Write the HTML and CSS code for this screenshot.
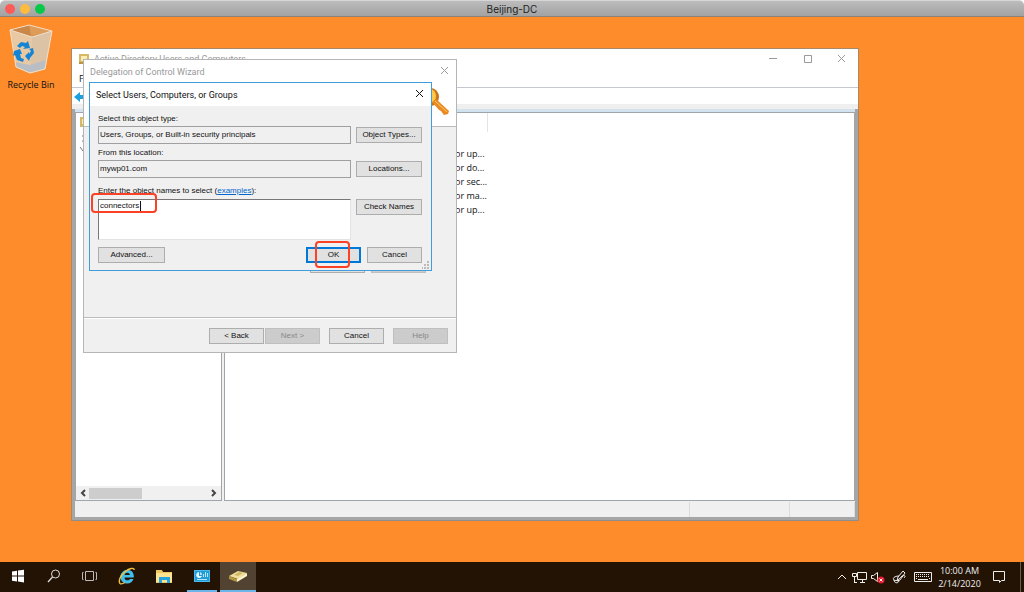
FILE: index.html
```html
<!DOCTYPE html>
<html lang="en">
<head>
<meta charset="utf-8">
<title>Beijing-DC</title>
<meta name="viewport" content="width=device-width, initial-scale=1">
<link rel="stylesheet" href="styles.css">
</head>
<body>
<header class="mac-bar">
  <div class="lights"><button class="light red" aria-label="Close session"></button><button class="light yellow" aria-label="Minimize session"></button><button class="light green" aria-label="Zoom session"></button></div>
  <h1 class="mac-title">Beijing-DC</h1>
</header>

<main class="desktop">
  <div class="shortcut">
    <svg class="bin" viewBox="0 0 46 52" aria-hidden="true">
      <path d="M2 6L21 1l23 6-7 38-15 4-14-6z" fill="#e9c9a4"/>
      <path d="M2 6L21 1l23 6-20 6z" fill="#c98749"/>
      <path d="M21 1l2 11 20-5z" fill="#df9b58"/>
      <path d="M24 13L44 7l-7 38-15 4z" fill="#dcc3a6"/>
      <path d="M7 38l15 3 16-5-1 9-15 4-14-6z" fill="#b9bec4"/>
      <path d="M2 6l22 7 20-6M2 6L21 1l23 6-7 38-15 4-14-6z" fill="none" stroke="#f3dfc8" stroke-width="1"/>
      <g fill="#1485d4"><path d="M9 22l4-4 5 1 2-2 2 7-7 1 2-2-3-1-2 2z"/><path d="M6 27l6-2 2 5-2 0 1 4 3 1-1 3-6-2-2-5-2 1z"/><path d="M17 32l4-4 0 2 2-3-2-2 4-1 1 5-4 5-1 3z"/></g>
    </svg>
    <span>Recycle Bin</span>
  </div>

  <section class="window aduc" aria-label="Active Directory Users and Computers">
    <header class="aduc-title">
      <svg class="book" viewBox="0 0 12 12" aria-hidden="true"><path d="M1 1h10v10H1z" fill="#d8b963"/><path d="M3 3h6v5H3z" fill="#f8edb9"/><path d="M1 9h10v2H1z" fill="#b99540"/></svg>
      <span class="caption">Active Directory Users and Computers</span>
      <div class="caption-buttons">
        <button class="plain" aria-label="Minimize"><svg viewBox="0 0 9 9"><path d="M0 4.500h8"/></svg></button>
        <button class="plain" aria-label="Maximize"><svg viewBox="0 0 9 9"><path d="M1.500 1.500h7v7h-7z"/></svg></button>
        <button class="plain" aria-label="Close"><svg viewBox="0 0 9 9"><path d="M1 1l7 7M8 1L1 8"/></svg></button>
      </div>
    </header>
    <nav class="menu"><button class="plain" aria-label="File">F</button></nav>
    <div class="tools"><button class="plain" aria-label="Back"><svg viewBox="0 0 12 12"><path d="M0 6l6-5v3h6v4H6v3z" fill="#1ba1e2" stroke="none"/></svg></button></div>
    <div class="panes">
      <div class="tree">
        <div class="tree-items">
          <svg class="book" viewBox="0 0 12 12" aria-hidden="true"><path d="M1 1h10v10H1z" fill="#d8b963"/><path d="M3 3h6v5H3z" fill="#f8edb9"/></svg>
          <svg class="twist" viewBox="0 0 8 36" aria-hidden="true"><path d="M3 8h2M3 13h2M1 19l3 4 3-4" fill="none" stroke="#777"/></svg>
        </div>
        <div class="scroll">
          <button class="plain" aria-label="Scroll left"><svg viewBox="0 0 8 8"><path d="M6 1L3 4l3 3"/></svg></button>
          <div class="thumb"></div>
          <button class="plain" aria-label="Scroll right"><svg viewBox="0 0 8 8"><path d="M2 1l3 3-3 3"/></svg></button>
        </div>
      </div>
      <div class="list">
        <div class="list-head"></div>
        <ul class="rows"><li>or up...</li><li>or do...</li><li>or sec...</li><li>or ma...</li><li>or up...</li></ul>
      </div>
    </div>
    <footer class="status"><span></span><span></span><span></span></footer>
  </section>

  <section class="window wizard" aria-label="Delegation of Control Wizard">
    <header class="wizard-title">
      <span class="caption">Delegation of Control Wizard</span>
      <button class="plain" aria-label="Close wizard"><svg viewBox="0 0 9 9"><path d="M1 1l7 7M8 1L1 8"/></svg></button>
    </header>
    <div class="banner">
      <svg viewBox="0 0 28 28" aria-hidden="true"><ellipse cx="9" cy="9" rx="8" ry="9" fill="#c77518"/><ellipse cx="8" cy="8" rx="6" ry="7" fill="#ffc84a"/><path d="M5 1c5 1 6 7 4 15-4 0-6-1-8-4z" fill="#6f8790"/><path d="M10 14l4-3 13 12-1 3-4 1-3-4-2-1z" fill="#e98b22"/><path d="M13 13l12 11" stroke="#ffc868" stroke-width="1"/></svg>
    </div>
    <div class="wizard-body"><button class="btn" aria-label="Add"></button><button class="btn off" aria-label="Remove"></button></div>
    <footer class="wizard-foot">
      <button class="btn">&lt; Back</button><button class="btn off" disabled>Next &gt;</button>
      <button class="btn spaced">Cancel</button><button class="btn off spaced" disabled>Help</button>
    </footer>
  </section>

  <section class="window picker" role="dialog" aria-label="Select Users, Computers, or Groups">
    <header class="picker-title">
      <span class="caption">Select Users, Computers, or Groups</span>
      <button class="plain" aria-label="Close dialog"><svg viewBox="0 0 9 9"><path d="M1 1l7 7M8 1L1 8"/></svg></button>
    </header>
    <form class="form">
      <label for="type">Select this object type:</label>
      <div class="line"><input id="type" readonly value="Users, Groups, or Built-in security principals"><button type="button" class="btn">Object Types...</button></div>
      <label for="place">From this location:</label>
      <div class="line"><input id="place" readonly value="mywp01.com"><button type="button" class="btn">Locations...</button></div>
      <div class="names-label"><label for="names"><u>E</u>nter the object names to select</label> (<a href="#">examples</a>):</div>
      <div class="line names-line">
        <div class="names-box"><textarea id="names">connectors</textarea><i class="caret"></i><i class="mark mark-name"></i></div>
        <button type="button" class="btn">Check Names</button>
      </div>
      <div class="actions">
        <button type="button" class="btn wide">Advanced...</button>
        <div class="ok-box"><button type="button" class="btn primary">OK</button><i class="mark mark-ok"></i></div>
        <button type="button" class="btn">Cancel</button>
      </div>
    </form>
    <svg class="grip" viewBox="0 0 8 8" aria-hidden="true"><path d="M5 0h2v2H5zM2 3h2v2H2zM5 3h2v2H5zM0 6h1v2H0zM2 6h2v2H2zM5 6h2v2H5z" fill="#bbb"/></svg>
  </section>
</main>

<footer class="taskbar">
  <div class="apps">
    <button class="app" aria-label="Start"><svg viewBox="0 0 18 18"><path d="M3 4.500l5-.7V8.600H3zM9 3.600l6-.8v5.800H9zM3 9.600h5v4.800l-5-.7zM9 9.600h6v5.800l-6-.8z" fill="#fff"/></svg></button>
    <button class="app" aria-label="Search"><svg viewBox="0 0 18 18"><circle cx="10.500" cy="7" r="4" fill="none" stroke="#ddd"/><path d="M7.500 10L3 15" stroke="#ddd" stroke-width="1.300"/></svg></button>
    <button class="app" aria-label="Task view"><svg viewBox="0 0 18 18"><path d="M4.500 4.500h8v9h-8zM2.500 5.500h-1v7h1M14.500 5.500h1v7h-1" fill="none" stroke="#bbb"/></svg></button>
    <button class="app" aria-label="Internet Explorer"><svg viewBox="0 0 18 18"><path d="M15.800 10.500H6.500c0 3.500 4.500 3.500 5.500 1.500h3.500c-1.300 3.500-4 4.800-7 4.500C4.500 16 2.200 13 2.400 9.500 2.800 5.500 6 2.700 9.500 2.700c4.300.2 6.800 3.300 6.300 7.800zM6.600 8h5.300c-.3-3-4.800-3-5.300 0z" fill="#43bdeb"/><path d="M2 16.500C.2 14 2 9 7 4.700 11.500 1 16 .3 16.300 3M2 16.500c1 .8 3 .2 5-1" fill="none" stroke="#f3c13c" stroke-width="1.400"/></svg></button>
    <button class="app" aria-label="File Explorer"><svg viewBox="0 0 18 18"><path d="M1 3h6l1 2h9v11H1z" fill="#f0c75e"/><path d="M1 6h16v9H1z" fill="#ffe391"/><path d="M4 10h11v6h-3v-3H7v3H4z" fill="#25a5df"/></svg></button>
    <button class="app running" aria-label="Server Manager"><svg viewBox="0 0 18 18"><path d="M1 3h16v12H1z" fill="#4bbbed"/><path d="M2 4h14v10H2z" fill="#229bd4"/><path d="M6 5a3 3 0 1 0 3 4H6z" fill="#e4f6ff"/><path d="M7 5a3 3 0 0 1 2 3H7zM10 7h1v3h-1zM12 5h1v5h-1zM14 6h1v4h-1zM4 12h10v1H4z" fill="#b7e7ff"/></svg></button>
    <button class="app running active" aria-label="Active Directory"><svg viewBox="0 0 18 18"><path d="M0 9l9-5 9 2-9 6z" fill="#f0df9a"/><path d="M0 9l8 3v3l-8-3z" fill="#b39742"/><path d="M8 12l10-6v3l-10 6z" fill="#fff4c7"/><path d="M5 8l5-3 4 1-5 3z" fill="#d0b864"/></svg></button>
  </div>
  <div class="tray">
    <button class="plain" aria-label="Hidden icons"><svg viewBox="0 0 18 14"><path d="M5 9l4-4 4 4"/></svg></button>
    <button class="plain" aria-label="Network"><svg viewBox="0 0 18 14"><path d="M6.500 2.500h9v7h-9zM9 12.500h5M11.500 10v2M3.500 6v6M1.500 3.500h4v3h-4zM3 12.500h3"/></svg></button>
    <button class="plain" aria-label="Volume muted"><svg viewBox="0 0 18 14"><path d="M2.500 5.500h2l4-3v9l-4-3h-2z"/><circle cx="12" cy="10" r="3.500" fill="#e51b2e" stroke="none"/><path d="M10.500 8.500l3 3M13.500 8.500l-3 3"/></svg></button>
    <button class="plain pen" aria-label="Ink workspace"><svg viewBox="0 0 18 14"><path d="M6 11l1-4 5-6 2 2-5 7-3 1M8 6c-4 0-7 2-5 4 3 2 5-1 8-4 3-1 4 0 2 2M3 10c0 3 4 4 5 1"/></svg></button>
    <button class="plain keys" aria-label="Touch keyboard"><svg viewBox="0 0 20 14"><path d="M1.500 2.500h17v9h-17z"/><path d="M3 4.500h14M3 6.500h14" stroke-dasharray="1 1"/><path d="M5 9.500h10M3 8.500h1M16 8.500h1"/></svg></button>
    <time class="clock" datetime="2020-02-14T10:00">10:00 AM<br>2/14/2020</time>
    <button class="plain note" aria-label="Notifications"><svg viewBox="0 0 18 14"><path d="M3.500 1.500h11v9h-3l-2 2v-2h-6z"/></svg></button>
  </div>
</footer>
</body>
</html>
```
FILE: styles.css
```css
* { box-sizing: border-box; }

body {
  margin: 0;
  min-height: 100vh;
  display: flex;
  flex-direction: column;
  background: #fff;
  font: 8px/12px "Liberation Sans", sans-serif;
  color: #111;
}

button, input, textarea { font: inherit; color: inherit; margin: 0; border-radius: 0; }
.plain { border: 0; padding: 0; background: none; display: flex; }
.plain svg { width: 9px; height: 9px; fill: none; stroke: currentColor; }

.mac-bar {
  height: 17px;
  display: grid;
  grid-template-columns: 1fr auto 1fr;
  align-items: center;
  padding: 0 5px;
  background: linear-gradient(#bcbcbc, #a2a2a2);
  border-top: 1px solid #d6d6d6;
  border-bottom: 1px solid #8b8177;
  border-radius: 5px 5px 0 0;
}
.lights { display: flex; gap: 5px; }
.light { width: 10px; height: 10px; border: 0; padding: 0; border-radius: 50%; }
.red { background: #fc5b57; }
.yellow { background: #fdbc40; }
.green { background: #06c94a; }
.mac-title { margin: 0; font: 10px/14px Inter, sans-serif; color: #222; }

.desktop { flex: 1; position: relative; background: #ff8c2b; }
.window { position: absolute; display: flex; flex-direction: column; }
.caption { font: 9px/12px Roboto, sans-serif; flex: 1; white-space: nowrap; }

.shortcut {
  width: 62px;
  padding-top: 7px;
  display: flex;
  flex-direction: column;
  align-items: center;
  gap: 2px;
  font: 9px/14px "Open Sans", sans-serif;
}
.bin { width: 46px; height: 52px; }

/* Console window */
.aduc { left: 71px; right: 165px; top: 31px; bottom: 41px; background: #fff; border: 1px solid #a98866; border-bottom-color: #8e8e8e; }
.aduc-title { display: flex; height: 20px; padding: 4px 12px 0 6px; gap: 4px; color: #9a9a9a; }
.book { width: 12px; height: 12px; }
.caption-buttons { display: flex; gap: 25px; padding-top: 1px; }
.menu { height: 19px; padding: 4px 7px; border-bottom: 1px solid #c4c7cf; font: 9px/12px "Open Sans", sans-serif; }
.tools { height: 21px; padding: 3px 2px; border-bottom: 5px solid #efefef; }
.tools svg { width: 12px; height: 12px; }
.panes { flex: 1; min-height: 0; display: flex; gap: 2px; background: #f0f0f0; border: solid #a6a6a6; border-width: 0 3px; box-shadow: inset 0 3px #d3e2ef; padding-top: 3px; }
.tree, .list { background: #fff; border: 1px solid #a0a4ab; display: flex; flex-direction: column; }
.tree { width: 147px; }
.tree-items { flex: 1; padding: 3px; }
.tree-items svg { display: block; }
.twist { width: 8px; height: 36px; }
.list { flex: 1; }
.list-head { width: 263px; height: 19px; border-right: 1px solid #e4e4e4; }
.rows { list-style: none; margin: 0; padding: 15px 0 0 230px; font: 9px/14px "Open Sans", sans-serif; }
.scroll { height: 14px; display: flex; align-items: center; background: #f0f0f0; padding: 0 3px; color: #444; }
.scroll svg { width: 8px; height: 8px; stroke-width: 2; }
.thumb { width: 53px; height: 11px; background: #cdcdcd; margin: 0 auto 0 2px; }
.status { height: 19px; display: flex; background: #f0f0f0; border: solid #a6a6a6; border-width: 0 3px 3px; }
.status span { flex: 1; margin-top: 1px; border-right: 1px solid #dcdcdc; }
.status span:nth-child(2) { flex: 0 0 100px; }
.status span:nth-child(3) { flex: 0 0 65px; }

/* Buttons */
.btn { width: 55px; height: 16px; padding: 0; border: 1px solid #adadad; background: #e1e1e1; white-space: nowrap; }
.btn.off { background: #cccccc; border-color: #bfbfbf; color: #888; }
.btn.wide { width: 67px; }
.btn.primary { border: 2px solid #0078d7; }

/* Wizard */
.wizard { left: 83px; top: 42px; width: 374px; background: #f0f0f0; border: 1px solid #b5b5b5; }
.wizard-title { display: flex; padding: 6px 7px 4px 6px; background: #fff; color: #999; }
.banner { height: 45px; background: #fff; border-bottom: 1px solid #bbb; display: flex; justify-content: flex-end; padding: 6px 6px 0; }
.banner svg { width: 28px; height: 28px; }
.wizard-body { height: 191px; border-bottom: 1px solid #bbb; box-shadow: 0 1px #fff; display: flex; justify-content: flex-end; align-items: flex-end; gap: 6px; padding: 0 30px 44px; }
.wizard-foot { display: flex; justify-content: flex-end; gap: 1px; padding: 10px 8px 8px; }
.spaced { margin-left: 8px; }

/* Object picker */
.picker { left: 89px; top: 65px; width: 343px; background: #f0f0f0; border: 1px solid #3f9ddb; }
.picker-title { display: flex; padding: 6px 7px 5px 6px; background: #fff; }
.form { display: flex; flex-direction: column; padding: 7px 9px 7px 8px; }
.form > label, .names-label { line-height: 12px; padding-bottom: 1px; }
.line { display: flex; gap: 5px; align-items: center; margin-bottom: 3px; }
.line .btn { width: 66px; }
.line input { flex: 1; min-width: 0; height: 18px; padding: 0 1px 2px; border: 1px solid #a0a0a0; background: #f0f0f0; outline: 0; }
.names-label { padding: 4px 0 2px; }
.names-label a { color: #0066cc; }
.names-line { align-items: flex-start; margin-bottom: 7px; }
.names-box { flex: 1; position: relative; display: flex; }
.names-box textarea { width: 100%; height: 41px; padding: 0 1px; resize: none; background: #fff; border: 1px solid #777; border-right-color: #e3e3e3; border-bottom-color: #e3e3e3; outline: 0; }
.caret { position: absolute; left: 42px; top: 2px; width: 1px; height: 10px; background: #111; }
.actions { display: flex; gap: 6px; }
.ok-box { margin-left: auto; position: relative; display: flex; }
.mark { position: absolute; border: 2px solid #fb4226; border-radius: 4px; pointer-events: none; }
.mark-name { left: -7px; top: -6px; width: 66px; height: 20px; }
.mark-ok { left: 9px; top: -6px; width: 35px; height: 27px; }
.grip { position: absolute; right: 1px; bottom: 1px; width: 8px; height: 8px; }

/* Taskbar */
.taskbar { height: 30px; display: flex; justify-content: space-between; background: #231304; color: #eee; }
.apps { display: flex; }
.app { width: 36px; padding: 0; border: 0; border-bottom: 2px solid transparent; background: none; display: flex; align-items: center; justify-content: center; }
.app svg { width: 18px; height: 18px; }
.app:nth-child(n+4) { margin-left: 1px; }
.app.running { width: 30px; border-color: #6cb5ea; margin: 0 3px 0 5px; }
.app.active { width: 36px; background: #514232; margin: 0; }
.tray { display: flex; align-items: center; padding-right: 3px; border-right: 1px solid #6a5e50; margin-right: 3px; }
.tray svg { width: 18px; height: 14px; }
.tray .pen { margin-left: 4px; }
.tray .keys { margin-left: 4px; }
.tray .keys svg { width: 20px; }
.clock { width: 53px; text-align: center; font: 9px/13px "Open Sans", sans-serif; }
.note { margin: 0 9px 0 4px; }
```
